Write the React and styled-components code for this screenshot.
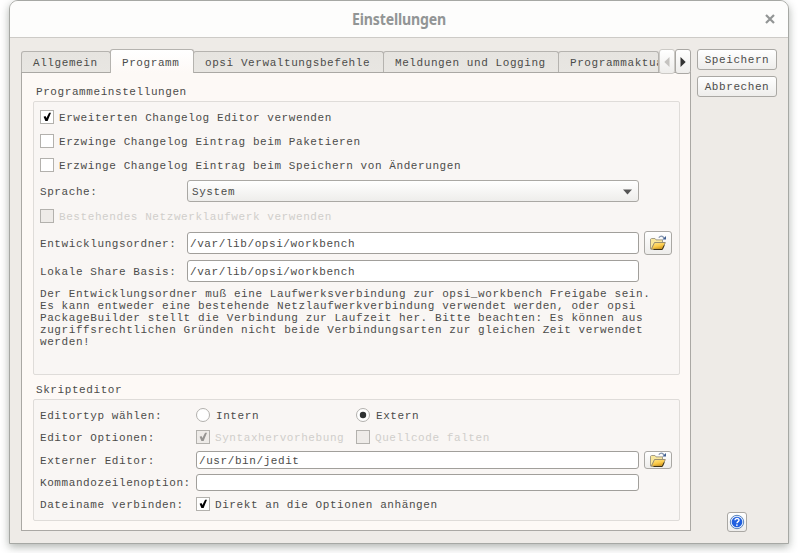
import React from "react";
import styled, { createGlobalStyle, css } from "styled-components";

const Global = createGlobalStyle`
  * { box-sizing: border-box; }
  body { margin: 0; background: #fff; overflow: hidden; }
`;

const Desktop = styled.div`
  height: 553px;
  padding-left: 9px;
  overflow: hidden;
  font: 11px/12px "Liberation Mono", monospace;
  letter-spacing: 0.58px;
  color: #4c4c4a;
  white-space: pre;
`;

const Window = styled.div`
  width: 780px;
  height: 544px;
  border: 1px solid #a6a8a4;
  border-radius: 9px 9px 0 0;
  background: #eeebe7;
  box-shadow: 0 3px 9px rgba(40, 50, 40, 0.36);
  overflow: hidden;
`;

const TitleBar = styled.header`
  display: grid;
  grid-template-columns: 36px 1fr 36px;
  align-items: center;
  height: 37px;
  border-bottom: 1px solid #cdcbc7;
  background: #fdfdfc;
  color: #929595;
`;

const Title = styled.h1`
  grid-column: 2;
  margin: 0;
  text-align: center;
  font: bold 15.5px/20px "Noto Sans", sans-serif;
  letter-spacing: -0.2px;
  transform: scaleX(0.91);
`;

const CloseIcon = styled.svg`
  width: 10px;
  height: 10px;
  margin-left: 13px;
`;

const Content = styled.main`
  display: flex;
  gap: 6px;
  padding: 11px 0 0 11px;
`;

const TabArea = styled.section`
  width: 670px;
`;

const TabStrip = styled.nav`
  display: flex;
  align-items: flex-end;
  height: 23px;
`;

const Tab = styled.div`
  flex: none;
  width: ${(p) => p.$width}px;
  height: 21px;
  margin-left: ${(p) => (p.$first ? 0 : -1)}px;
  padding: 5px 0 0 11px;
  border: 1px solid #b5b3af;
  border-bottom: 0;
  border-radius: 3px 3px 0 0;
  background: linear-gradient(#e6e4e0, #e8e6e2);
  overflow: hidden;
  ${(p) =>
    p.$active &&
    css`
      position: relative;
      height: 24px;
      margin-bottom: -1px;
      padding-top: 7px;
      background: linear-gradient(#ffffff, #fdf9f6);
    `}
`;

const TabScroll = styled.div`
  display: flex;
  position: relative;
  height: 25px;
  margin-bottom: -2px;
`;

const raised = css`
  border: 1px solid #aaa8a4;
  border-radius: 3px;
  background: linear-gradient(#ffffff, #eeedeb);
`;

const ScrollButton = styled.div`
  ${raised}
  display: grid;
  place-items: center;
  width: 16px;
  height: 25px;
  border-color: ${(p) => (p.$disabled ? "#cccac6" : "#aaa8a4")};
  color: ${(p) => (p.$disabled ? "#c5c3c0" : "#333")};
`;

const Panel = styled.div`
  height: 459px;
  padding: 13px 10px 0 11px;
  border: 1px solid #aaa8a4;
  background: #fdf9f6;
`;

const GroupTitle = styled.h2`
  height: 12px;
  margin: 0 0 3px 3px;
  font: inherit;
`;

const Group = styled.div`
  width: 647px;
  height: ${(p) => p.$height}px;
  margin-bottom: 9px;
  padding: ${(p) => p.$top}px 0 0 6px;
  border: 1px solid #dfdcd9;
  border-radius: 2px;
  background: #f9f6f4;
`;

const Row = styled.div`
  display: flex;
  align-items: center;
  height: ${(p) => p.$height}px;
`;

const Label = styled.div`
  flex: none;
  width: ${(p) => p.$width}px;
  padding-top: 1px;
`;

const Option = styled.label`
  display: flex;
  align-items: center;
  gap: ${(p) => (p.$radio ? 6 : 5)}px;
  width: ${(p) => (p.$width ? p.$width + "px" : "auto")};
  color: ${(p) => (p.$disabled ? "#d0cecb" : "inherit")};
`;

const OptionText = styled.span`
  padding-top: 2px;
`;

const Box = styled.span`
  display: block;
  flex: none;
  width: 14px;
  height: 14px;
  border: 1px solid #b3b1ad;
  border-radius: ${(p) => (p.$round ? "50%" : "0")};
  background: ${(p) => (p.$disabled ? "#eeebe8" : "#fff")};
  color: ${(p) => (p.$disabled ? "#969492" : "#000")};
  svg { display: block; }
`;

const Field = styled.div`
  flex: none;
  display: flex;
  align-items: center;
  width: ${(p) => p.$width}px;
  height: ${(p) => p.$height}px;
  padding: 2px 0 0 2px;
  border: 1px solid #a19f9b;
  border-radius: 3px;
  background: #fff;
`;

const Select = styled.div`
  ${raised}
  display: flex;
  align-items: center;
  justify-content: space-between;
  width: 452px;
  height: 22px;
  padding: 1px 6px 0 4px;
`;

const IconButton = styled.div`
  ${raised}
  flex: none;
  display: grid;
  place-items: center;
  width: ${(p) => p.$width}px;
  height: ${(p) => p.$height}px;
  margin-left: ${(p) => p.$left || 0}px;
  svg { display: block; }
`;

const Note = styled.p`
  margin: 5px 0 0;
  line-height: 12px;
`;

const SideBar = styled.aside`
  display: flex;
  flex-direction: column;
  gap: 6px;
  width: 80px;
  height: 483px;
`;

const Button = styled.div`
  ${raised}
  display: grid;
  place-items: center;
  height: 21px;
  padding-top: 1px;
`;

const HelpSlot = styled.div`
  margin-top: auto;
  padding-left: 30px;
`;

const Check = () => (
  <svg width="12" height="12" viewBox="0 0 12 12" fill="currentColor">
    <path d="M2.6 5.7 4.5 5.1 5.4 7 8.1 1.8H10L6.6 9.9H4.4Z" />
  </svg>
);

const Dot = () => (
  <svg width="12" height="12" viewBox="0 0 12 12">
    <circle cx="6" cy="6" r="3.2" fill="#2f3233" />
  </svg>
);

const Folder = () => (
  <svg width="16" height="16" viewBox="0 0 16 16">
    <defs>
      <linearGradient id="folderFront" x1="0" y1="0" x2="0.5" y2="1">
        <stop offset="0" stopColor="#ffe88e" />
        <stop offset="0.6" stopColor="#fbcb4a" />
        <stop offset="1" stopColor="#d69a1c" />
      </linearGradient>
    </defs>
    <path d="M0.5 14V4.2L1.5 3.5H5L6 4.9H12.5V7.5H5L1.5 14Z" fill="#f9e79c" stroke="#a39c88" />
    <path d="M4.5 7.5H15.3L12.5 14.3H1.3Z" fill="url(#folderFront)" stroke="#9c9070" />
    <path d="M3.5 14.5H12.2L14.2 10.4" fill="none" stroke="#3c3015" />
    <path d="M8.8 2.6Q11.6 -0.6 14 2.8" fill="none" stroke="#8293ad" strokeWidth="1.3" />
    <path d="M16 1V4.6H12.3Z" fill="#405f91" />
  </svg>
);

const Help = () => (
  <svg width="16" height="16" viewBox="0 0 16 16">
    <circle cx="8" cy="8" r="6.7" fill="#e8f1fc" stroke="#4a78b8" strokeWidth="0.9" />
    <circle cx="8" cy="8" r="5.3" fill="#1f5fe0" />
    <path d="M6 6.3C6 3.9 10.2 4 10 6.3C9.9 7.6 8.1 7.7 8 9.2" fill="none" stroke="#fff" strokeWidth="1.4" />
    <circle cx="7.9" cy="11.1" r="0.85" fill="#fff" />
  </svg>
);

const Arrow = ({ left }) => (
  <svg width="6" height="10" viewBox="0 0 6 10" fill="currentColor">
    <path d={left ? "M5.5 0V10L0.3 5Z" : "M0.5 0V10L5.7 5Z"} />
  </svg>
);

function Choice({ text, checked, disabled, radio, width }) {
  return (
    <Option $width={width} $disabled={disabled} $radio={radio}>
      <Box $round={radio} $disabled={disabled}>
        {checked && (radio ? <Dot /> : <Check />)}
      </Box>
      <OptionText>{text}</OptionText>
    </Option>
  );
}

const NOTE = `Der Entwicklungsordner muß eine Laufwerksverbindung zur opsi_workbench Freigabe sein.
Es kann entweder eine bestehende Netzlaufwerkverbindung verwendet werden, oder opsi
PackageBuilder stellt die Verbindung zur Laufzeit her. Bitte beachten: Es können aus
zugriffsrechtlichen Gründen nicht beide Verbindungsarten zur gleichen Zeit verwendet
werden!`;

export default function App() {
  return (
    <Desktop>
      <Global />
      <Window>
        <TitleBar>
          <Title>Einstellungen</Title>
          <CloseIcon viewBox="0 0 10 10">
            <path d="M1 1 9 9M9 1 1 9" stroke="currentColor" strokeWidth="2.2" />
          </CloseIcon>
        </TitleBar>
        <Content>
          <TabArea>
            <TabStrip>
              <Tab $width={90} $first>Allgemein</Tab>
              <Tab $width={84} $active>Programm</Tab>
              <Tab $width={191}>opsi Verwaltungsbefehle</Tab>
              <Tab $width={176}>Meldungen und Logging</Tab>
              <Tab $width={101}>Programmaktua</Tab>
              <TabScroll>
                <ScrollButton $disabled><Arrow left /></ScrollButton>
                <ScrollButton><Arrow /></ScrollButton>
              </TabScroll>
            </TabStrip>
            <Panel>
              <GroupTitle>Programmeinstellungen</GroupTitle>
              <Group $height={274} $top={3}>
                <Row $height={24}><Choice text="Erweiterten Changelog Editor verwenden" checked /></Row>
                <Row $height={24}><Choice text="Erzwinge Changelog Eintrag beim Paketieren" /></Row>
                <Row $height={24}><Choice text="Erzwinge Changelog Eintrag beim Speichern von Änderungen" /></Row>
                <Row $height={28}>
                  <Label $width={147}>Sprache:</Label>
                  <Select>
                    System
                    <svg width="9" height="6" viewBox="0 0 9 6"><path d="M0 .5H9L4.5 5.5Z" fill="#555" /></svg>
                  </Select>
                </Row>
                <Row $height={22}><Choice text="Bestehendes Netzwerklaufwerk verwenden" disabled /></Row>
                <Row $height={32}>
                  <Label $width={147}>Entwicklungsordner:</Label>
                  <Field $width={452} $height={22}>/var/lib/opsi/workbench</Field>
                  <IconButton $width={28} $height={24} $left={5}><Folder /></IconButton>
                </Row>
                <Row $height={24}>
                  <Label $width={147}>Lokale Share Basis:</Label>
                  <Field $width={452} $height={22}>/var/lib/opsi/workbench</Field>
                </Row>
                <Note>{NOTE}</Note>
              </Group>
              <GroupTitle>Skripteditor</GroupTitle>
              <Group $height={122} $top={4}>
                <Row $height={22}>
                  <Label $width={156}>Editortyp wählen:</Label>
                  <Choice text="Intern" radio width={160} />
                  <Choice text="Extern" radio checked />
                </Row>
                <Row $height={22}>
                  <Label $width={156}>Editor Optionen:</Label>
                  <Choice text="Syntaxhervorhebung" checked disabled width={160} />
                  <Choice text="Quellcode falten" disabled />
                </Row>
                <Row $height={24}>
                  <Label $width={156}>Externer Editor:</Label>
                  <Field $width={443} $height={18}>/usr/bin/jedit</Field>
                  <IconButton $width={28} $height={18} $left={5}><Folder /></IconButton>
                </Row>
                <Row $height={21}>
                  <Label $width={156}>Kommandozeilenoption:</Label>
                  <Field $width={443} $height={17} />
                </Row>
                <Row $height={22}>
                  <Label $width={156}>Dateiname verbinden:</Label>
                  <Choice text="Direkt an die Optionen anhängen" checked />
                </Row>
              </Group>
            </Panel>
          </TabArea>
          <SideBar>
            <Button>Speichern</Button>
            <Button>Abbrechen</Button>
            <HelpSlot>
              <IconButton $width={20} $height={20}><Help /></IconButton>
            </HelpSlot>
          </SideBar>
        </Content>
      </Window>
    </Desktop>
  );
}
